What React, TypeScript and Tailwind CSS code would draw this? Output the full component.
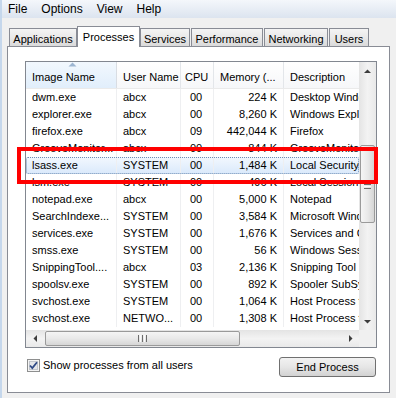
import React from "react";

const rows: string[][] = [
  ["dwm.exe", "abcx", "00", "224 K", "Desktop Window Manager"],
  ["explorer.exe", "abcx", "00", "8,260 K", "Windows Explorer"],
  ["firefox.exe", "abcx", "09", "442,044 K", "Firefox"],
  ["GrooveMonitor...", "abcx", "00", "844 K", "GrooveMonitor Utility"],
  ["lsass.exe", "SYSTEM", "00", "1,484 K", "Local Security Authority Process"],
  ["lsm.exe", "SYSTEM", "00", "496 K", "Local Session Manager Service"],
  ["notepad.exe", "abcx", "00", "5,000 K", "Notepad"],
  ["SearchIndexe...", "SYSTEM", "00", "3,584 K", "Microsoft Windows Search Indexer"],
  ["services.exe", "SYSTEM", "00", "1,676 K", "Services and Controller app"],
  ["smss.exe", "SYSTEM", "00", "56 K", "Windows Session Manager"],
  ["SnippingTool....", "abcx", "03", "2,136 K", "Snipping Tool"],
  ["spoolsv.exe", "SYSTEM", "00", "892 K", "Spooler SubSystem App"],
  ["svchost.exe", "SYSTEM", "00", "1,064 K", "Host Process for Windows Services"],
  ["svchost.exe", "NETWO...", "00", "1,308 K", "Host Process for Windows Services"],
];

const tabs = [
  { label: "Applications", cls: "w-[68px]" },
  { label: "Processes", cls: "w-[63px]", active: true },
  { label: "Services", cls: "w-[50px]" },
  { label: "Performance", cls: "w-[72px] ml-px" },
  { label: "Networking", cls: "w-[64px] ml-px" },
  { label: "Users", cls: "w-[40px] ml-px" },
];

function Arrow({ dir }: { dir: "up" | "down" | "left" | "right" }) {
  const vertical = dir === "up" || dir === "down";
  const w = vertical ? 7 : 4;
  const h = vertical ? 4 : 7;
  const d = {
    up: "M0 4L3.5 0.5L7 4Z",
    down: "M0 0L3.5 3.5L7 0Z",
    left: "M4 0L0.5 3.5L4 7Z",
    right: "M0 0L3.5 3.5L0 7Z",
  }[dir];
  return (
    <svg width={w} height={h} viewBox={`0 0 ${w} ${h}`}>
      <path d={d} fill="#3d3d3d" />
    </svg>
  );
}

export default function App() {
  return (
    <div className="relative w-[396px] h-[398px] overflow-hidden bg-[#f0f0f0] border-l-2 border-[#c5d7ec] font-['Liberation_Sans',Arial,sans-serif] text-black">
      {/* menu */}
      <div className="h-[18px] flex items-center gap-[14px] pl-[6px] text-[12px] bg-linear-to-b from-[#f4f7fb] to-[#dce4ef]">
        <span>File</span>
        <span>Options</span>
        <span>View</span>
        <span>Help</span>
      </div>

      {/* tabs */}
      <div className="h-[28px] ml-[5px] pl-[2px] flex items-end text-[11px]">
        {tabs.map((t) =>
          t.active ? (
            <div
              key={t.label}
              className={`${t.cls} relative z-10 -mb-px h-[21px] bg-white border border-b-0 border-[#898c95] flex justify-center pt-[2px]`}
            >
              {t.label}
            </div>
          ) : (
            <div
              key={t.label}
              className={`${t.cls} h-[18px] border border-b-0 border-[#898c95] bg-linear-to-b from-[#f4f4f4] via-[#e9e9e9] to-[#dadada] flex justify-center pt-[2px]`}
            >
              {t.label}
            </div>
          )
        )}
      </div>

      {/* panel */}
      <div className="ml-[5px] w-[383px] h-[347px] bg-white border border-[#898c95] pt-[14px] pl-[17px] text-[11px]">
        <div className="w-[352px] h-[287px] border border-[#828790] flex flex-col">
          <div className="flex flex-1 min-h-0">
            <div className="w-[333px] overflow-hidden">
              {/* header */}
              <div className="flex h-[27px] border-b border-[#eaeaea] bg-linear-to-b from-white to-[#f6f7f9] whitespace-nowrap">
                <div className="relative w-[91px] shrink-0 pl-[6px] pt-[5px] flex items-center border-r border-[#d9dde3] bg-linear-to-b from-[#f2f8fe] to-[#e1eefb]">
                  Image Name
                  <svg className="absolute left-[42px] top-0" width="9" height="5" viewBox="0 0 9 5">
                    <path d="M0.5 4.5L4.5 0.5L8.5 4.5Z" fill="#9db6d2" />
                  </svg>
                </div>
                <div className="w-[64px] shrink-0 pl-[6px] pt-[5px] flex items-center border-r border-[#e3e6ea]">User Name</div>
                <div className="w-[33px] shrink-0 pl-[4px] pt-[5px] flex items-center border-r border-[#e3e6ea] overflow-hidden">CPU</div>
                <div className="w-[70px] shrink-0 pl-[6px] pt-[5px] flex items-center border-r border-[#e3e6ea]">Memory (...</div>
                <div className="w-[75px] shrink-0 pl-[6px] pt-[5px] flex items-center">Description</div>
              </div>
              {/* rows */}
              {rows.map((r, i) => (
                <div
                  key={i}
                  className={`flex h-[17px] items-center whitespace-nowrap ${
                    i === 4
                      ? "bg-linear-to-b from-[#f3f8fe] to-[#d9e9fb] rounded-[2px] outline-1 outline-dotted outline-[#6e8db4] -outline-offset-1"
                      : ""
                  }`}
                >
                  <div className="w-[91px] shrink-0 h-full flex items-center pl-[6px] border-r border-[#eeeff1]">{r[0]}</div>
                  <div className="w-[64px] shrink-0 h-full flex items-center pl-[6px] border-r border-[#eeeff1]">{r[1]}</div>
                  <div className="w-[33px] shrink-0 h-full flex items-center pl-[9px] border-r border-[#eeeff1]">{r[2]}</div>
                  <div className="w-[70px] shrink-0 h-full flex items-center justify-end pr-[6px] border-r border-[#eeeff1]">{r[3]}</div>
                  <div className="w-[75px] shrink-0 h-full flex items-center pl-[6px] overflow-hidden">{r[4]}</div>
                </div>
              ))}
            </div>

            {/* vertical scrollbar */}
            <div className="w-[17px] flex flex-col bg-linear-to-r from-[#e4e4e4] via-[#f3f3f3] to-[#e9e9e9]">
              <div className="h-[17px] flex items-center justify-center pt-[1px]">
                <Arrow dir="up" />
              </div>
              <div className="mt-[66px] ml-px w-[15px] h-[78px] rounded-[2px] border border-[#9a9a9a] bg-linear-to-r from-[#f5f5f5] via-[#e9e9e9] to-[#d6d6d6] flex flex-col items-center justify-center gap-px">
                <div className="w-[7px] h-px bg-[#6d6d6d]" />
                <div className="w-[7px] h-px bg-[#fbfbfb]" />
                <div className="w-[7px] h-px bg-[#6d6d6d]" />
                <div className="w-[7px] h-px bg-[#fbfbfb]" />
                <div className="w-[7px] h-px bg-[#6d6d6d]" />
              </div>
              <div className="flex-1" />
              <div className="h-[17px] flex items-center justify-center">
                <Arrow dir="down" />
              </div>
            </div>
          </div>

          {/* horizontal scrollbar */}
          <div className="flex h-[17px]">
            <div className="w-[333px] flex items-center bg-linear-to-b from-[#e4e4e4] via-[#f3f3f3] to-[#e9e9e9]">
              <div className="w-[17px] h-full flex items-center justify-center">
                <Arrow dir="left" />
              </div>
              <div className="ml-[2px] w-[195px] h-[15px] rounded-[2px] border border-[#9a9a9a] bg-linear-to-b from-[#f5f5f5] via-[#e9e9e9] to-[#d6d6d6] flex items-center justify-center gap-px">
                <div className="h-[7px] w-px bg-[#6d6d6d]" />
                <div className="h-[7px] w-px bg-[#fbfbfb]" />
                <div className="h-[7px] w-px bg-[#6d6d6d]" />
                <div className="h-[7px] w-px bg-[#fbfbfb]" />
                <div className="h-[7px] w-px bg-[#6d6d6d]" />
              </div>
              <div className="flex-1" />
              <div className="w-[17px] h-full flex items-center justify-center">
                <Arrow dir="right" />
              </div>
            </div>
            <div className="w-[17px] bg-[#f0f0f0]" />
          </div>
        </div>

        {/* footer */}
        <div className="w-[352px] mt-[9px] flex justify-between items-start">
          <div className="ml-[2px] flex items-center">
            <svg width="13" height="13" viewBox="0 0 13 13">
              <rect x="0.5" y="0.5" width="12" height="12" fill="#f4f4f4" stroke="#8e8f8f" />
              <rect x="2.5" y="2.5" width="8" height="8" fill="#e4e6ea" stroke="#c2c6cd" />
              <path d="M3 6.5L5.3 9L10 3.2" fill="none" stroke="#2f4a86" strokeWidth="1.8" />
            </svg>
            <span className="ml-[3px]">Show processes from all users</span>
          </div>
          <div className="mr-px w-[97px] h-[20px] rounded-[3px] border border-[#707070] bg-linear-to-b from-[#f2f2f2] via-[#e6e6e6] to-[#d2d2d2] flex items-center justify-center">
            End Process
          </div>
        </div>
      </div>

      {/* red highlight */}
      <div className="absolute left-[15px] top-[147px] w-[361px] h-[37px] border-4 border-[#ff0000]" />
    </div>
  );
}
